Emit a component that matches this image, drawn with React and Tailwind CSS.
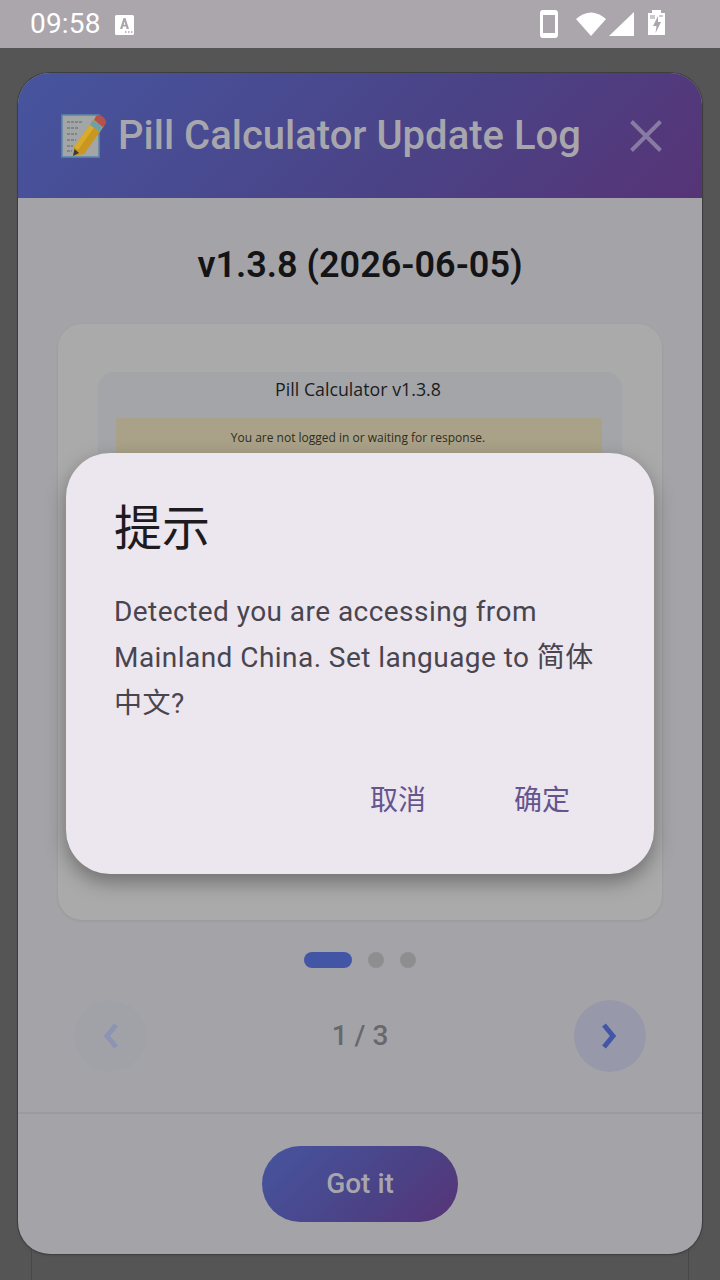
const roboto = "font-['Roboto',sans-serif]";

function Memo() {
  return (
    <svg width="48" height="48" viewBox="0 0 48 48" className="shrink-0">
      <rect x="3" y="3" width="37" height="42" fill="#a3a6a6" stroke="#5e86a6" strokeWidth="1.6" />
      <path d="M8 10h15M8 16h12M8 22h10M8 28h9M8 34h6M8 39h5" stroke="#60646a" strokeWidth="1.2" fill="none" strokeDasharray="3 1" />
      <path d="M15 35 L35 7 L45 14 L25 42 L14 44 Z" fill="#c9971f" />
      <path d="M15 35 L35 7 L39 10 L19 38 Z" fill="#d9ab2c" />
      <path d="M34 8 L44 15 L41 20 L31 13 Z" fill="#6ea0a8" />
      <path d="M37 4 Q40 2 43 4 L46 7 Q48 10 46 13 L44 15 L35 8 Z" fill="#b5524e" />
      <path d="M14 44 L15.5 37 L20 41 Z" fill="#3a3a3a" />
    </svg>
  );
}

export default function App() {
  return (
    <div className={`relative w-[720px] h-[1280px] overflow-hidden bg-[#555555] ${roboto}`}>
      <div className="flex h-[48px] items-center justify-between bg-[#aaa6ab] pl-[30px] pr-[55px]">
        <div className="flex items-center gap-[14px]">
          <span className="text-[28px] leading-none tracking-[0.2px] text-white">09:58</span>
          <svg width="19" height="20" viewBox="0 0 19 20" className="mt-[2px]">
            <rect width="19" height="20" rx="1.500" fill="#fff" />
            <path d="M5 14 L8.500 3 h2 L14 14 h-2.400 l-0.700 -2.500 h-2.800 L7.400 14 Z M8.700 9.700 h1.600 L9.500 6.500 Z" fill="#aaa6ab" fillRule="evenodd" />
            <path d="M10 17h1.500M13 17h1.500M16 17h1.500" stroke="#aaa6ab" strokeWidth="1.500" />
          </svg>
        </div>
        <svg width="125" height="30" viewBox="0 0 125 30">
          <path fillRule="evenodd" fill="#fff" d="M3 1 h12 a3 3 0 0 1 3 3 v22 a3 3 0 0 1 -3 3 h-12 a3 3 0 0 1 -3 -3 v-22 a3 3 0 0 1 3 -3 Z M3 6 v18 h12 v-18 Z" />
          <path fill="#fff" d="M36 10 Q51 -3 66 10 L51 27 Z" />
          <path fill="#fff" d="M69 27 L94 3 V27 Z" />
          <path fill="#fff" d="M112 1 h9 v3 h4 v22 h-17 v-22 h4 Z" />
          <path fill="#aaa6ab" d="M118 7 L113 17 h3.500 l-1 7 L121 13 h-3 Z" />
          <path fill="#aaa6ab" fillOpacity="0.6" d="M110 6 h5 v4 h-5 Z M119 6 h4 v2 h-4 Z" />
        </svg>
      </div>

      <div className="relative flex h-[1232px] flex-col px-[18px] pt-[25px]">
        <div className="pointer-events-none absolute left-[31px] right-[31px] top-[1190px] h-[60px] border-x border-[#484848]" />
        <div className="relative flex h-[1181px] flex-col overflow-hidden rounded-[32px] bg-[#a4a4a8] shadow-[0_0_0_1px_#3e3e3e,0_1px_3px_#444]">
          <div className="flex h-[125px] shrink-0 items-center bg-linear-[135deg,#46559f,#4b4286_60%,#563476] pl-[41px] pr-[38px]">
            <Memo />
            <h1 className="ml-[11px] flex-1 text-[40px] font-medium leading-none whitespace-nowrap text-[#a8a6ad]">Pill Calculator Update Log</h1>
            <svg width="36" height="36" viewBox="0 0 36 36" className="shrink-0">
              <path d="M3.500 3.500 L32.500 32.500 M32.500 3.500 L3.500 32.500" stroke="#877aa3" strokeWidth="4" fill="none" />
            </svg>
          </div>

          <div className="flex flex-1 flex-col">
            <h2 className="mt-[46px] text-center text-[36px] font-semibold leading-[42px] text-[#141416]">v1.3.8 (2026-06-05)</h2>

            <div className="mx-[40px] mt-[38px] h-[596px] shrink-0 rounded-[24px] bg-[#aaaaaa] px-[40px] pt-[48px] shadow-[0_1px_3px_rgba(0,0,0,0.08)]">
              <div className="h-[300px] rounded-t-[16px] bg-[#a3a5a8] pl-[18px] pr-[20px] pt-[5px]">
                <p className="pr-[2px] text-center font-['Open_Sans',sans-serif] text-[17.800px] leading-[24px] text-[#1c1c1e]">Pill Calculator v1.3.8</p>
                <div className="mt-[17px] h-[120px] rounded-t-[3px] bg-[#a9a288] pt-[11px]">
                  <p className="pr-[2px] text-center font-['Open_Sans',sans-serif] text-[12px] leading-[18px] text-[#2f2c22]">You are not logged in or waiting for response.</p>
                </div>
              </div>
            </div>

            <div className="mt-[32px] flex items-center justify-center gap-[16px]">
              <span className="h-[16px] w-[48px] rounded-full bg-[#4356a6]" />
              <span className="h-[16px] w-[16px] rounded-full bg-[#8e8e90]" />
              <span className="h-[16px] w-[16px] rounded-full bg-[#8e8e90]" />
            </div>

            <div className="mt-[32px] flex items-center justify-between px-[56px]">
              <div className="flex h-[72px] w-[72px] items-center justify-center rounded-full bg-[#a1a2a8]">
                <svg width="20" height="28" viewBox="0 0 20 28"><path d="M16 3 L7 14 L16 25" fill="none" stroke="#8d93b3" strokeWidth="5" /></svg>
              </div>
              <span className="text-[28px] font-medium leading-none text-[#68686c]">1 / 3</span>
              <div className="flex h-[72px] w-[72px] items-center justify-center rounded-full bg-[#9799aa]">
                <svg width="20" height="28" viewBox="0 0 20 28"><path d="M4 3 L13 14 L4 25" fill="none" stroke="#4356a6" strokeWidth="5" /></svg>
              </div>
            </div>

            <div className="mt-[40px] flex flex-1 items-start justify-center border-t-2 border-[#9a9a9f] pt-[32px]">
              <button className="h-[76px] w-[196px] rounded-full bg-linear-[135deg,#46559f,#4b4286_60%,#563476] text-[28px] font-medium text-[#a8a6ad]">Got it</button>
            </div>
          </div>
        </div>
      </div>

      <div className="absolute left-[66px] top-[453px] h-[421px] w-[588px] rounded-[44px] bg-[#ece6ee] px-[48px] pt-[43px] shadow-[0_8px_20px_rgba(0,0,0,0.35)]">
        <h3 className="font-['Noto_Sans_CJK_SC',sans-serif] text-[48px] leading-[56px] text-[#1d1b20]">提示</h3>
        <p className="mt-[37px] font-['Roboto','Noto_Sans_CJK_SC',sans-serif] text-[28px] leading-[46px] tracking-[0.45px] text-[#49454f]">Detected you are accessing from Mainland China. Set language to 简体中文?</p>
        <div className="mt-[51px] flex justify-end gap-[88px] pr-[36px] font-['Noto_Sans_CJK_SC',sans-serif] text-[28px] leading-[40px] text-[#65558f]">
          <span>取消</span>
          <span>确定</span>
        </div>
      </div>
    </div>
  );
}
